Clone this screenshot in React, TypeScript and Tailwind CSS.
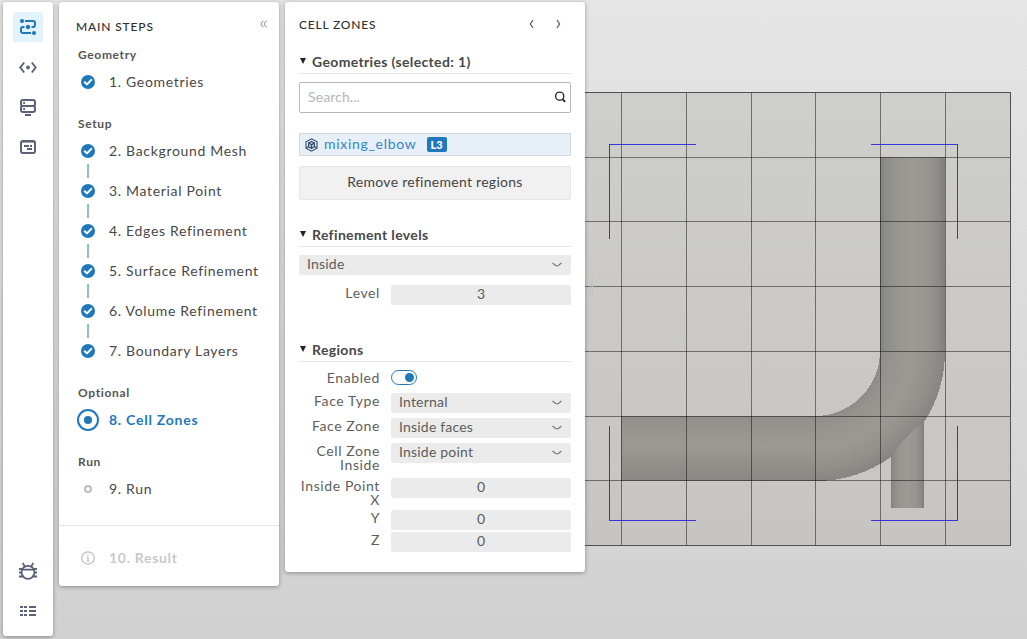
import type { ReactNode } from 'react';

const COLS = [621, 686, 751, 815, 880, 945];
const ROWS = [157, 221, 286, 351, 416, 480];

function Viewport() {
  return (
    <svg className="absolute inset-0" width="1027" height="639" shapeRendering="crispEdges">
      <defs>
        <linearGradient id="face" x1="0" y1="0" x2="0" y2="1">
          <stop offset="0" stopColor="#cececa" />
          <stop offset="1" stopColor="#c7c5c1" />
        </linearGradient>
        <linearGradient id="tubeV" x1="0" y1="0" x2="1" y2="0">
          <stop offset="0" stopColor="#81817e" />
          <stop offset="0.08" stopColor="#8d8c88" />
          <stop offset="0.25" stopColor="#969590" />
          <stop offset="0.5" stopColor="#9b9a94" />
          <stop offset="0.75" stopColor="#969590" />
          <stop offset="0.92" stopColor="#8a8985" />
          <stop offset="1" stopColor="#7f7e7b" />
        </linearGradient>
        <linearGradient id="tubeH" x1="0" y1="0" x2="0" y2="1">
          <stop offset="0" stopColor="#8f8e8a" />
          <stop offset="0.15" stopColor="#94938e" />
          <stop offset="0.5" stopColor="#9a9993" />
          <stop offset="0.75" stopColor="#908f8a" />
          <stop offset="1" stopColor="#898884" />
        </linearGradient>
        <radialGradient id="bend" gradientUnits="userSpaceOnUse" cx="815" cy="351" r="130">
          <stop offset="0.5" stopColor="#8e8d89" />
          <stop offset="0.57" stopColor="#94938e" />
          <stop offset="0.74" stopColor="#9a9993" />
          <stop offset="0.88" stopColor="#92918c" />
          <stop offset="1" stopColor="#868581" />
        </radialGradient>
      </defs>
      <rect x="556" y="92" width="455" height="454" fill="url(#face)" />
      <rect x="891" y="418" width="33" height="90" fill="url(#tubeV)" />
      <rect x="880" y="157" width="65" height="195" fill="url(#tubeV)" />
      <rect x="621" y="416" width="195" height="65" fill="url(#tubeH)" />
      <path
        d="M880 351 H945 A130 130 0 0 1 924 422 Q916 427 905 438 Q897 448 891 457 A130 130 0 0 1 815 481 V416 A65 65 0 0 0 880 351 Z"
        fill="url(#bend)"
      />
      <g fill="#000" fillOpacity="0.46">
        {COLS.map((x) => (
          <rect key={x} x={x} y="93" width="1" height="452" />
        ))}
        {ROWS.map((y) => (
          <rect key={y} x="556" y={y} width="454" height="1" />
        ))}
      </g>
      <path d="M556 92.5 H1010.5 V545.5 H556" fill="none" stroke="#525150" />
      <path
        d="M609.5 239 V144.5 H696 M871 144.5 H957.5 V239 M609.5 426 V520.5 H696 M871 520.5 H957.5 V426"
        fill="none"
        stroke="#3434dc"
      />
      <path d="M590.5 275 V299 M592.5 275 V299" stroke="#c3c3c5" />
    </svg>
  );
}

function FlowIcon() {
  return (
    <svg width="18" height="18" viewBox="0 0 18 18" fill="none" stroke="#1f78ba" strokeWidth="2">
      <path d="M6 3 H14 Q16 3 16 5 V7 Q16 9 14 9 H4 Q2 9 2 11 V13 Q2 15 4 15 H12" />
      <g fill="#1f78ba" stroke="none">
        <circle cx="3" cy="3" r="2.1" />
        <circle cx="15" cy="15" r="2.1" />
      </g>
      <circle cx="9" cy="9" r="2.9" fill="#1f78ba" stroke="#e3f3fe" strokeWidth="1.4" />
    </svg>
  );
}

function CodeIcon() {
  return (
    <svg width="18" height="12" viewBox="0 0 18 12" fill="none" stroke="#5a6178" strokeWidth="1.9">
      <path d="M5.2 1.5 L1.3 6.5 L5.2 11.5 M12.8 1.5 L16.7 6.5 L12.8 11.5" />
      <circle cx="9" cy="6.5" r="1.9" fill="#5a6178" stroke="none" />
    </svg>
  );
}

function ServerIcon() {
  return (
    <svg width="18" height="18" viewBox="0 0 18 18" fill="none" stroke="#5a6178" strokeWidth="2">
      <rect x="2" y="2" width="14" height="6" rx="2" />
      <rect x="2" y="8" width="14" height="6" rx="2" />
      <path d="M4.2 5 H6 M4.2 11 H6 M6 17 H12" />
    </svg>
  );
}

function ConsoleIcon() {
  return (
    <svg width="18" height="16" viewBox="0 0 18 16" fill="none" stroke="#5a6178" strokeWidth="2">
      <rect x="2" y="2" width="14" height="12" rx="2" />
      <path d="M2.5 2.6 H15.5" />
      <path d="M5 7 H10 M11 7 H13 M8 10 H13" strokeWidth="1.8" />
    </svg>
  );
}

function BugIcon() {
  return (
    <svg width="18" height="18" viewBox="0 0 18 18" fill="none" stroke="#5a6178" strokeWidth="1.8">
      <circle cx="9" cy="10.3" r="6.5" />
      <path d="M3 7.6 H15 M5.8 4.6 L3.8 1 M12.2 4.6 L14.2 1 M0 7 H3.6 M0 10.5 H3 M0 14.5 H4.4 M14.4 7 H18 M15 10.5 H18 M13.6 14.5 H18" />
    </svg>
  );
}

function ListIcon() {
  return (
    <svg width="16" height="10" viewBox="0 0 16 10" fill="#5a6178" shapeRendering="crispEdges">
      {[0, 4, 8].map((y) => (
        <path key={y} d={`M0 ${y} h3 v2 h-3 z M4 ${y} h3 v2 h-3 z M9 ${y} h7 v2 h-7 z`} />
      ))}
    </svg>
  );
}

function Rail() {
  const slot = 'flex h-[30px] w-[30px] items-center justify-center rounded-[2px]';
  return (
    <nav className="flex h-[634px] w-[50px] flex-col items-center justify-between rounded-[3px] bg-white pt-[10px] pb-[10px] shadow-[0_1px_4px_rgba(0,0,0,0.35)]">
      <div className="flex flex-col gap-[10px]">
        <div className={`${slot} bg-[#e3f3fe]`}><FlowIcon /></div>
        <div className={slot}><CodeIcon /></div>
        <div className={slot}><ServerIcon /></div>
        <div className={slot}><ConsoleIcon /></div>
      </div>
      <div className="flex flex-col gap-[10px]">
        <div className={slot}><BugIcon /></div>
        <div className={slot}><ListIcon /></div>
      </div>
    </nav>
  );
}

function CheckMark() {
  return (
    <svg width="14" height="14" viewBox="0 0 14 14">
      <circle cx="7" cy="7" r="7" fill="#1f78ba" />
      <path d="M3.7 7.2 L6 9.4 L10.3 4.9" fill="none" stroke="#fff" strokeWidth="2" strokeLinecap="round" strokeLinejoin="round" />
    </svg>
  );
}

function Step({ icon, children, tone = 'text-[#484848] tracking-[0.68px]' }: { icon: ReactNode; children: string; tone?: string }) {
  return (
    <div className="flex h-[26px] items-center">
      <span className="flex w-[22px] shrink-0 justify-center">{icon}</span>
      <span className={`ml-[10px] text-[14px] leading-[20px] whitespace-nowrap ${tone}`}>{children}</span>
    </div>
  );
}

function Group({ title, children }: { title: string; children: ReactNode }) {
  return (
    <section className="mb-[19px]">
      <h3 className="mb-[4px] pl-px text-[12px] leading-[20px] font-bold tracking-[0.65px] text-[#555]">{title}</h3>
      {children}
    </section>
  );
}

const SETUP = ['2. Background Mesh', '3. Material Point', '4. Edges Refinement', '5. Surface Refinement', '6. Volume Refinement', '7. Boundary Layers'];

function StepsPanel() {
  return (
    <aside className="flex h-[584px] w-[220px] flex-col rounded-[3px] bg-white shadow-[0_1px_4px_rgba(0,0,0,0.35)]">
      <header className="flex h-[43px] items-start justify-between pt-[15px] pr-[12px] pl-[17px]">
        <h2 className="text-[12px] leading-[20px] font-medium tracking-[0.85px] text-[#303030]">MAIN STEPS</h2>
        <svg className="mt-[3px]" width="7" height="8" viewBox="0 0 7 8" fill="none" stroke="#858585">
          <path d="M3.2 0.6 L0.8 4 L3.2 7.4 M6.4 0.6 L4 4 L6.4 7.4" />
        </svg>
      </header>
      <div className="h-[480px] pl-[18px]">
        <Group title="Geometry">
          <Step icon={<CheckMark />}>1. Geometries</Step>
        </Group>
        <Group title="Setup">
          {SETUP.map((label, i) => (
            <div key={label}>
              {i > 0 && <div className="ml-[10px] h-[14px] w-[2px] bg-[#8fbbdc]" />}
              <Step icon={<CheckMark />}>{label}</Step>
            </div>
          ))}
        </Group>
        <Group title="Optional">
          <Step
            tone="font-bold text-[#1f78ba] tracking-[0.75px]"
            icon={
              <svg width="22" height="22" viewBox="0 0 22 22">
                <circle cx="11" cy="11" r="10" fill="none" stroke="#1f78ba" strokeWidth="2" />
                <circle cx="11" cy="11" r="4.1" fill="#1f78ba" />
              </svg>
            }
          >
            8. Cell Zones
          </Step>
        </Group>
        <Group title="Run">
          <Step icon={<span className="h-[8px] w-[8px] rounded-full border-2 border-[#bdbdbd]" />}>9. Run</Step>
        </Group>
      </div>
      <footer className="flex-1 border-t border-[#e6e6e6] pt-[19px] pl-[18px]">
        <Step
          tone="font-bold text-[#c8c8c8] tracking-[0.7px]"
          icon={
            <svg width="14" height="14" viewBox="0 0 14 14" fill="none" stroke="#c0c0c0">
              <circle cx="7" cy="7" r="6.2" strokeWidth="1.3" />
              <path d="M7 3.4 V5 M7 6.2 V10.4 M5.8 6.4 H7 M5.8 10.2 H8.2" strokeWidth="1.3" />
            </svg>
          }
        >
          10. Result
        </Step>
      </footer>
    </aside>
  );
}

function Heading({ children }: { children: string }) {
  return (
    <h3 className="flex h-[24px] items-center border-b border-[#e6e6e6] text-[14px] font-bold tracking-[0.35px] text-[#484848]">
      <svg className="mr-[6px] mb-[1px] ml-[1px]" width="6" height="6" viewBox="0 0 6 6"><path d="M0 0 H6 L3 6 Z" fill="#222" /></svg>
      {children}
    </h3>
  );
}

function Select({ children }: { children: string }) {
  return (
    <div className="flex h-[20px] flex-1 items-center justify-between rounded-[2px] bg-[#ebebeb] pr-[9px] pl-[8px] text-[14px] leading-[20px] text-[#5c5c5c]">
      <span className="-mt-[2px] tracking-[0.2px]">{children}</span>
      <svg className="-mt-px" width="10" height="5" viewBox="0 0 10 5" fill="none" stroke="#777" strokeWidth="1.2"><path d="M0.6 1 L3.6 3.4 Q5 4.2 6.4 3.4 L9.4 1" /></svg>
    </div>
  );
}

function Value({ children }: { children: string }) {
  return <div className="h-[20px] flex-1 rounded-[2px] bg-[#ebebeb] text-center text-[14px] leading-[18px] text-[#5c5c5c]">{children}</div>;
}

function Field({ label, children, size }: { label: string; children: ReactNode; size: string }) {
  return (
    <div className={`flex items-start ${size}`}>
      <label className="mt-[1px] mr-[11px] -ml-px w-[82px] shrink-0 text-right text-[14px] leading-[14px] tracking-[0.6px] text-[#5e5e5e]">{label}</label>
      {children}
    </div>
  );
}

function ZonesPanel() {
  return (
    <aside className="h-[570px] w-[300px] rounded-[3px] bg-white px-[14px] shadow-[0_1px_4px_rgba(0,0,0,0.35)]">
      <header className="flex h-[48px] items-start pt-[13px]">
        <h2 className="flex-1 text-[12px] leading-[20px] font-medium tracking-[0.8px] text-[#303030]">CELL ZONES</h2>
        <svg className="mt-[4px] mr-[10px]" width="32" height="10" viewBox="0 0 32 10" fill="none" stroke="#555b70" strokeWidth="1.3">
          <path d="M4 1 L1.4 5 L4 9 M28 1 L30.6 5 L28 9" />
        </svg>
      </header>
      <Heading>Geometries (selected: 1)</Heading>
      <div className="mt-[8px] flex h-[31px] items-center justify-between rounded-[2px] border border-[#b8b8b8] pr-[4px] pl-[8px] text-[14px] text-[#b5b5b5]">
        <span className="-mt-[2px] tracking-[0.1px]">Search...</span>
        <svg className="mb-px" width="12" height="12" viewBox="0 0 12 12" fill="none" stroke="#2b2b2b" strokeWidth="1.4"><circle cx="5.7" cy="5.2" r="4.1" /><path d="M8.6 8 L11 10.8" strokeWidth="2" /></svg>
      </div>
      <div className="mt-[20px] flex h-[23px] items-center border border-[#d5dade] bg-[#e7f0f8] pl-[5px]">
        <svg width="13" height="14" viewBox="0 0 13 14" fill="none" stroke="#344966" strokeWidth="1.1">
          <path d="M6.5 0.8 L12 3.8 V10.2 L6.5 13.2 L1 10.2 V3.8 Z" />
          <path d="M6.5 3.4 L9.5 5 V8.8 L6.5 10.5 L3.5 8.8 V5 Z" fill="#b8cee2" />
          <path d="M3.5 5 L6.5 6.8 L9.5 5 M6.5 6.8 V10.5 M1 10 L3.5 8.8 M12 10 L9.5 8.8" />
        </svg>
        <span className="-mt-[2px] ml-[6px] text-[14px] leading-[20px] tracking-[0.7px] text-[#3385c4]">mixing_elbow</span>
        <span className="ml-[10px] h-[15px] w-[20px] rounded-[2px] bg-[#1f78ba] text-center text-[11px] leading-[15px] font-black text-white">L3</span>
      </div>
      <button className="mt-[10px] block h-[34px] w-full rounded-[2px] border border-[#e7e7e7] bg-[#f1f1f1] pb-[2px] text-[14px] leading-[30px] tracking-[0.28px] text-[#444]">Remove refinement regions</button>

      <div className="mt-[23px]"><Heading>Refinement levels</Heading></div>
      <div className="mt-[8px] flex"><Select>Inside</Select></div>
      <Field label="Level" size="mt-[10px] h-[20px]"><Value>3</Value></Field>

      <div className="mt-[33px]"><Heading>Regions</Heading></div>
      <Field label="Enabled" size="mt-[8px] h-[23px]">
        <span className="flex h-[15px] w-[26px] items-center justify-end rounded-full border border-[#1f78ba] pr-[2px]">
          <span className="h-[9px] w-[9px] rounded-full bg-[#1f78ba]" />
        </span>
      </Field>
      <Field label="Face Type" size="h-[25px]"><Select>Internal</Select></Field>
      <Field label="Face Zone" size="h-[25px]"><Select>Inside faces</Select></Field>
      <Field label="Cell Zone Inside" size="h-[35px]"><Select>Inside point</Select></Field>
      <Field label="Inside Point X" size="h-[32px]"><Value>0</Value></Field>
      <Field label="Y" size="h-[22px]"><Value>0</Value></Field>
      <Field label="Z" size="h-[20px]"><Value>0</Value></Field>
    </aside>
  );
}

export default function App() {
  return (
    <div className="relative h-[639px] w-[1027px] overflow-hidden bg-linear-to-b from-[#e5e5e5] to-[#d1d1d1] font-['Lato','Noto_Sans',sans-serif]">
      <Viewport />
      <main className="relative flex items-start gap-[6px] pt-[2px] pl-[3px]">
        <Rail />
        <StepsPanel />
        <ZonesPanel />
      </main>
    </div>
  );
}
